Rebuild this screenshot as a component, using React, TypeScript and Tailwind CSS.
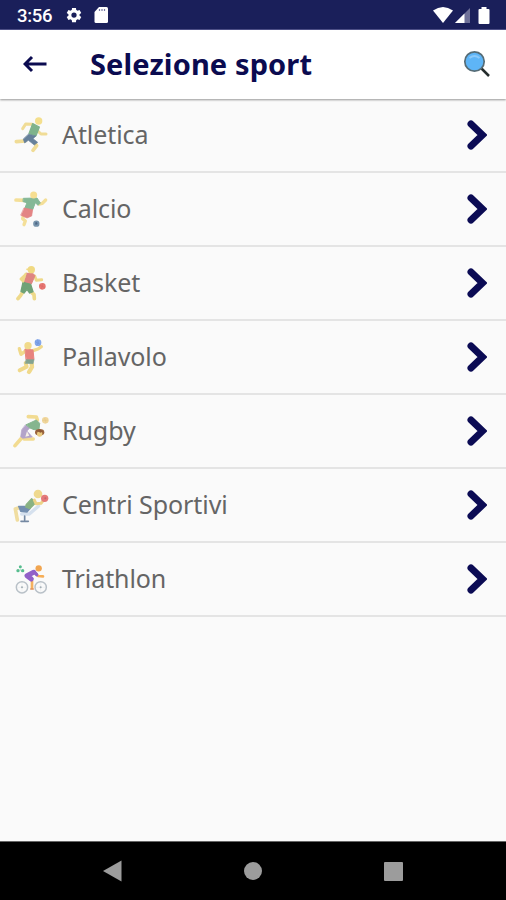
import React from "react";

const AthleticsIcon = () => (
  <svg viewBox="24 36 108 108" className="size-9" fill="none" strokeLinecap="round" strokeLinejoin="round">
    <path d="M82 58 L62 57 L53 71" stroke="#f0dc96" strokeWidth="9" />
    <path d="M97 77 L108 87 L123 87" stroke="#f0dc96" strokeWidth="9" />
    <path d="M60 108 L34 110" stroke="#f0dc96" strokeWidth="11" />
    <path d="M89 113 L95 122 L84 136" stroke="#f0dc96" strokeWidth="11" />
    <path d="M83 56 L103 66 L93 92 L72 86 Z" fill="#7fb38c" stroke="#7fb38c" strokeWidth="4" />
    <path d="M71 88 L93 93 L84 101 L98 112 L88 120 L70 106 L59 114 L55 103 Z" fill="#66809a" stroke="#66809a" strokeWidth="2" />
    <circle cx="101" cy="48" r="11" fill="#f4df8d" />
  </svg>
);

const SoccerIcon = () => (
  <svg viewBox="24 33 108 108" className="size-9" fill="none" strokeLinecap="round" strokeLinejoin="round">
    <path d="M60 61 L33 60" stroke="#f4df98" strokeWidth="11" />
    <path d="M102 72 L112 70 L122 60" stroke="#f4df98" strokeWidth="10" />
    <path d="M56 104 L53 116 L61 123 L57 134" stroke="#f4df98" strokeWidth="10" />
    <path d="M56 55 L96 54 L106 69 L99 76 L91 68 L83 89 L59 86 L66 68 L55 65 Z" fill="#84b896" stroke="#84b896" strokeWidth="3" />
    <path d="M58 84 L83 89 L80 108 L66 114 L48 106 Z" fill="#e38484" stroke="#e38484" strokeWidth="2" />
    <circle cx="86" cy="45" r="10.500" fill="#f6de91" />
    <circle cx="94" cy="131" r="9.500" fill="#7693ab" />
    <path d="M90 128 L95 126 L98 132 L92 135 Z" fill="#4d6585" />
  </svg>
);

const BasketballIcon = () => (
  <svg viewBox="24 33 108 108" className="size-9" fill="none" strokeLinecap="round" strokeLinejoin="round">
    <path d="M64 60 L48 75 L60 86" stroke="#eed98a" strokeWidth="9" />
    <path d="M89 66 L94 79 L110 77" stroke="#eed98a" strokeWidth="9" />
    <path d="M55 112 L47 124 L39 134" stroke="#eed98a" strokeWidth="11" />
    <path d="M80 115 L87 122 L88 134" stroke="#eed98a" strokeWidth="11" />
    <path d="M64 58 L83 58 L90 65 L79 90 L57 85 Z" fill="#df8582" stroke="#df8582" strokeWidth="3" />
    <path d="M54 85 L77 91 L84 113 L74 117 L66 106 L57 117 L48 112 Z" fill="#6fa277" stroke="#6fa277" strokeWidth="4" />
    <path d="M62 59 L54 83" stroke="#eed98a" strokeWidth="6" />
    <circle cx="79" cy="47" r="11" fill="#f0d982" />
    <path d="M66 46 H77" stroke="#f0d982" strokeWidth="5" />
    <circle cx="112" cy="97" r="10" fill="#e77772" />
    <path d="M104 94 L119 100 M114 89 L109 105" stroke="#d76363" strokeWidth="1.500" />
  </svg>
);

const VolleyballIcon = () => (
  <svg viewBox="24 33 108 108" className="size-9" fill="none" strokeLinecap="round" strokeLinejoin="round">
    <path d="M63 68 L48 79 L43 62" stroke="#f0d98b" strokeWidth="10" />
    <path d="M84 68 L99 63 L109 56" stroke="#f0d98b" strokeWidth="10" />
    <path d="M62 105 L65 116 L44 127" stroke="#f0d98b" strokeWidth="12" />
    <path d="M80 106 L81 117 L72 132" stroke="#f0d98b" strokeWidth="13" />
    <path d="M61 63 L84 66 L87 95 L64 95 Z" fill="#e7827d" stroke="#e7827d" strokeWidth="3" />
    <path d="M64 95 H87 L84 107 L61 106 Z" fill="#83a391" stroke="#83a391" strokeWidth="2" />
    <circle cx="69" cy="53" r="11" fill="#f1da8b" />
    <circle cx="99" cy="44" r="10" fill="#83a7ea" />
    <path d="M91 41 L105 49 M96 51 Q104 44 98 35" stroke="#658cda" strokeWidth="1.500" />
  </svg>
);

const RugbyIcon = () => (
  <svg viewBox="24 33 108 108" className="size-9" fill="none" strokeLinecap="round" strokeLinejoin="round">
    <path d="M70 44 L94 45 L97 54" stroke="#f2db91" strokeWidth="11" />
    <path d="M50 108 L30 131" stroke="#f2db91" strokeWidth="11" />
    <path d="M57 111 H85" stroke="#f2db91" strokeWidth="10" />
    <path d="M62 69 L75 77 L66 87 L82 105 L53 109 L47 104 L50 84 Z" fill="#b3a3c9" stroke="#b3a3c9" strokeWidth="2" />
    <path d="M66 88 L61 104 L73 101Z" fill="#f6efe6" />
    <path d="M64 68 L94 54 L104 64 L102 81 L87 83 L75 78 Z" fill="#85b58e" stroke="#85b58e" strokeWidth="3" />
    <ellipse cx="104" cy="91" rx="14" ry="10" fill="#9a643d" />
    <circle cx="104" cy="96" r="8" fill="#e9ca7f" />
    <path d="M92 86 L103 82 L115 88 L107 92 Z" fill="#8e5936" />
    <circle cx="121" cy="55" r="10" fill="#f0d69b" />
    <path d="M114 55 H127 M119 49 L123 61" stroke="#e1c286" strokeWidth="1.500" />
  </svg>
);

const SportsCenterIcon = () => (
  <svg viewBox="24 33 108 108" className="size-9" fill="none" strokeLinecap="round" strokeLinejoin="round">
    <path d="M40 96 L31 99 L37 132" stroke="#f0dda0" strokeWidth="11" />
    <path d="M50 114 L73 114 L101 90" stroke="#d6e1ee" strokeWidth="10" />
    <path d="M59 120 V132 M48 136 H70" stroke="#7488a2" strokeWidth="5" />
    <path d="M41 91 L64 91 L75 98 L66 108 L47 106 Z" fill="#748fb0" stroke="#748fb0" strokeWidth="4" />
    <path d="M64 85 L80 68 L92 80 L74 98 L62 93 Z" fill="#89b283" stroke="#89b283" strokeWidth="4" />
    <path d="M88 72 L93 83 L108 82 L115 73" stroke="#ecd388" strokeWidth="9" />
    <circle cx="99" cy="54" r="13" fill="#efd98e" />
    <circle cx="119" cy="67" r="11" fill="#e47a79" />
    <circle cx="121" cy="67" r="3" fill="#c66170" />
  </svg>
);

const TriathlonIcon = () => (
  <svg viewBox="24 33 108 108" className="size-9" fill="none" strokeLinecap="round" strokeLinejoin="round">
    <circle cx="51" cy="112" r="17" stroke="#b9c1c8" strokeWidth="4.500" />
    <circle cx="107" cy="112" r="17" stroke="#b9c1c8" strokeWidth="4.500" />
    <path d="M51 100 V124 M39 112 H63 M107 100 V124 M95 112 H119" stroke="#e5e8eb" strokeWidth="1.500" />
    <circle cx="51" cy="112" r="3" fill="#a4afb6" />
    <circle cx="107" cy="112" r="3" fill="#a4afb6" />
    <path d="M81 93 V114" stroke="#f5b15f" strokeWidth="8" />
    <path d="M77 117 H85" stroke="#df915b" strokeWidth="4" />
    <path d="M89 66 L99 78 L114 79" stroke="#f6ae57" strokeWidth="8" />
    <path d="M86 67 L66 77 L79 87" stroke="#9260c8" strokeWidth="15" />
    <path d="M88 66 L95 74" stroke="#9260c8" strokeWidth="10" />
    <circle cx="101" cy="55" r="9.500" fill="#f1a550" />
    <circle cx="46" cy="50" r="4.500" fill="#56bd8e" />
    <circle cx="39" cy="62" r="5" fill="#56bd8e" />
    <circle cx="53" cy="62" r="5" fill="#56bd8e" />
    <path d="M46 57 V61" stroke="#8bd3b2" strokeWidth="2" />
  </svg>
);

const sports = [
  { label: "Atletica", icon: AthleticsIcon },
  { label: "Calcio", icon: SoccerIcon },
  { label: "Basket", icon: BasketballIcon },
  { label: "Pallavolo", icon: VolleyballIcon },
  { label: "Rugby", icon: RugbyIcon },
  { label: "Centri Sportivi", icon: SportsCenterIcon },
  { label: "Triathlon", icon: TriathlonIcon },
];

const StatusBar = () => (
  <div className="flex h-[30px] shrink-0 items-center border-b border-[#50528a] bg-[#1a1f5a] pt-px pr-4 pl-[17px] text-white">
    <span className="pt-[2px] font-['Roboto',sans-serif] text-[18.5px] leading-none font-medium tracking-[-0.3px]">3:56</span>
    <svg viewBox="0 0 24 24" className="ml-[13px] size-[18px]" fill="currentColor">
      <path d="M19.4 13c.1-.7.1-1.3 0-2l2.3-1.7-2.3-4-2.7 1.1a8 8 0 0 0-1.7-1L14.6 2.500h-5.200L9 5.400a8 8 0 0 0-1.700 1L4.600 5.300l-2.300 4L4.600 11a8 8 0 0 0 0 2l-2.300 1.700 2.300 4 2.700-1.100a8 8 0 0 0 1.700 1l.4 2.900h5.200l.4-2.900a8 8 0 0 0 1.700-1l2.700 1.100 2.300-4zM12 15.500a3.500 3.500 0 1 1 0-7 3.500 3.500 0 0 1 0 7z" />
    </svg>
    <svg viewBox="0 0 14 16" className="ml-[11px] h-4 w-3.5">
      <path d="M5 0H12.500Q14 0 14 1.500V14.500Q14 16 12.500 16H2Q.5 16 .5 14.500V5Z" fill="currentColor" />
      <path d="M5.500 2V4M8 2V4M10.500 2V4" stroke="#777aa3" strokeWidth="1.200" />
    </svg>
    <div className="ml-auto flex items-center">
      <svg viewBox="0 0 20 16" className="h-4 w-5" fill="currentColor">
        <path d="M0 3.500Q10-3.500 20 3.500L10 16Z" />
      </svg>
      <svg viewBox="0 0 16 16" className="ml-[2px] h-4 w-4">
        <path d="M0 16L15 1V16Z" fill="#6f7199" />
        <path d="M0 16L9.500 6.500V16Z" fill="white" />
      </svg>
      <svg viewBox="0 0 12 17" className="ml-[7px] h-[17px] w-3" fill="currentColor">
        <path d="M3.500 0H8.500V2H10.500Q11.500 2 11.500 3V16Q11.500 17 10.500 17H1.500Q.5 17 .5 16V3Q.5 2 1.500 2H3.500Z" />
      </svg>
    </div>
  </div>
);

const Header = () => (
  <header className="z-10 flex h-[69px] shrink-0 items-center bg-white pr-[15px] pb-px pl-[23px] shadow-[0_1px_2px_rgba(0,0,0,0.4)]">
    <svg viewBox="0 0 24 18" className="h-[18px] w-6" fill="none" stroke="#0b0b50" strokeWidth="3">
      <path d="M2 9H23.500M9 2L2 9L9 16" />
    </svg>
    <h1 className="ml-[43px] pb-px font-['Noto_Sans',sans-serif] text-[29px] leading-none font-bold tracking-[0.12px] text-[#0b0b50]">
      Selezione sport
    </h1>
    <svg viewBox="0 0 28 28" className="ml-auto size-7" fill="none">
      <path d="M18 18L26 26" stroke="#252c2c" strokeWidth="2.500" />
      <circle cx="11.500" cy="11.500" r="9.700" fill="#5eb5f7" stroke="#566c76" strokeWidth="1.700" />
      <path d="M6.500 8Q11.500 4 16.500 8" stroke="#8ccafa" strokeWidth="2" />
    </svg>
  </header>
);

const App = () => {
  return (
    <div className="flex h-[900px] w-[506px] flex-col overflow-hidden bg-[#fafafa]">
      <StatusBar />
      <Header />
      <main className="flex-1">
        {sports.map(({ label, icon: Icon }) => (
          <div key={label} className="flex h-[74px] items-center border-b-2 border-[#e4e4e4] pr-[19px] pl-[13px]">
            <Icon />
            <span className="ml-[13px] pb-[2px] font-['Noto_Sans',sans-serif] text-[25px] leading-none tracking-[-0.08px] text-[#656565]">
              {label}
            </span>
            <svg viewBox="0 0 20 30" className="ml-auto h-[30px] w-5" fill="none">
              <path d="M4 4L15.500 15L4 26" stroke="#0b0b54" strokeWidth="7" strokeLinecap="round" />
            </svg>
          </div>
        ))}
      </main>
      <nav className="flex h-[59px] shrink-0 items-center border-t border-[#666] bg-black text-[#9c9c9c]">
        <svg viewBox="0 0 20 22" className="ml-[102px] h-[22px] w-5" fill="currentColor">
          <path d="M1 11L19.500 0.500V21.500Z" />
        </svg>
        <div className="ml-[122px] size-[18px] rounded-full bg-[#9c9c9c]" />
        <div className="ml-[122px] size-[19px] rounded-[1px] bg-[#9c9c9c]" />
      </nav>
    </div>
  );
};

export default App;
